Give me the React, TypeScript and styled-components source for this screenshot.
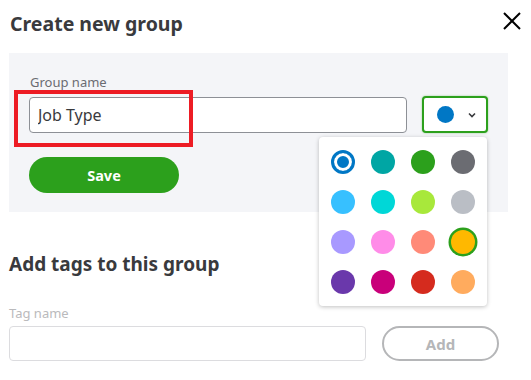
import React from 'react';
import styled, {createGlobalStyle} from "styled-components";

const GlobalStyle = createGlobalStyle`
    body {
        margin: 0;
        background: #ffffff;
        font-family: 'Noto Sans', 'Lato', sans-serif;
        color: #393a3d;
    }
`

const colors = [
    '#0077c5', '#00a6a4', '#2ca01c', '#6b6c72',
    '#37c0ff', '#00d7d7', '#a8e83b', '#babec5',
    '#a899ff', '#ff8ce8', '#ff8a78', '#ffb800',
    '#6a38ab', '#c9007a', '#d52b1e', '#ffab5e',
]

export default function App() {
    return (
        <>
            <GlobalStyle/>
            <Dialog>
                <Header>
                    <Title>Create new group</Title>
                    <CloseButton aria-label="close">
                        <svg width="18" height="18" viewBox="0 0 18 18">
                            <path d="M1 1 L17 17 M17 1 L1 17" stroke="#000" strokeWidth="2" fill="none"/>
                        </svg>
                    </CloseButton>
                </Header>

                <Panel>
                    <Label>Group name</Label>
                    <Row>
                        <NameInput defaultValue="Job Type"/>
                        <PickerWrap>
                            <ColorButton>
                                <Swatch $color="#0077c5" $size={17}/>
                                <svg width="8" height="6" viewBox="0 0 8 6">
                                    <path d="M1 1.5 L4 4.5 L7 1.5" stroke="#393a3d" strokeWidth="1.6" fill="none"/>
                                </svg>
                            </ColorButton>
                            <Popover>
                                {colors.map((c, i) => (
                                    <Dot key={c} $color={c} $state={i === 0 ? 'current' : i === 11 ? 'hover' : 'none'}/>
                                ))}
                            </Popover>
                        </PickerWrap>
                    </Row>
                    <SaveButton>Save</SaveButton>
                    <Highlight/>
                </Panel>

                <SectionTitle>Add tags to this group</SectionTitle>
                <Label $muted>Tag name</Label>
                <TagRow>
                    <TagInput/>
                    <AddButton disabled>Add</AddButton>
                </TagRow>
            </Dialog>
        </>
    );
}

const Dialog = styled.div`
    width: 531px;
    height: 380px;
    overflow: hidden;
    box-sizing: border-box;
    padding: 0 23px 0 9px;
`
const Header = styled.div`
    display: flex;
    justify-content: space-between;
    align-items: flex-start;
    height: 53px;
    padding-top: 11px;
    padding-left: 1px;
    margin-right: -12px;
    box-sizing: border-box;
`
const Title = styled.h1`
    margin: 0;
    font-size: 19.5px;
    line-height: 26px;
    font-weight: 700;
    color: #393a3d;
`
const CloseButton = styled.button`
    border: 0;
    background: none;
    padding: 0;
    margin-top: 1px;
    margin-right: -1px;
    display: flex;
`
const Panel = styled.section`
    position: relative;
    height: 159px;
    box-sizing: border-box;
    background: #f4f5f8;
    padding: 20px 20px 0 20px;
`
const Label = styled.div<{ $muted?: boolean }>`
    font-size: 13px;
    line-height: 18px;
    padding-left: ${p => p.$muted ? '0' : '1px'};
    color: ${p => p.$muted ? '#bababc' : '#6b6c72'};
    margin-bottom: ${p => p.$muted ? '4px' : '6px'};
`
const Row = styled.div`
    display: flex;
    align-items: flex-start;
    gap: 15px;
`
const NameInput = styled.input`
    width: 378px;
    height: 36px;
    box-sizing: border-box;
    border: 1px solid #8d9096;
    border-radius: 4px;
    background: #fff;
    padding: 0 8px;
    font-family: inherit;
    font-size: 16px;
    color: #393a3d;
    outline: none;
`
const PickerWrap = styled.div`
    position: relative;
`
const ColorButton = styled.button`
    width: 66px;
    height: 37px;
    margin-top: -1px;
    box-sizing: border-box;
    border: 2px solid #2ca01c;
    border-radius: 4px;
    background: #fff;
    display: flex;
    align-items: center;
    justify-content: center;
    gap: 14px;
    padding: 0 0 0 3px;
    box-shadow: 0 0 2px rgba(44, 160, 28, 0.5);
`
const Swatch = styled.span<{ $color: string, $size: number }>`
    width: ${p => p.$size}px;
    height: ${p => p.$size}px;
    border-radius: 50%;
    background: ${p => p.$color};
`
const Popover = styled.div`
    position: absolute;
    top: 40px;
    right: 1px;
    z-index: 2;
    width: 168px;
    box-sizing: border-box;
    display: grid;
    grid-template-columns: repeat(4, 24px);
    gap: 16px;
    padding: 13px 12px 12px;
    background: #fff;
    border-radius: 4px;
    box-shadow: 0 1px 4px rgba(0, 0, 0, 0.25);
`
const Dot = styled.span<{ $color: string, $state: 'current' | 'hover' | 'none' }>`
    width: 24px;
    height: 24px;
    box-sizing: border-box;
    border-radius: 50%;
    background: ${p => p.$state === 'current' ? '#fff' : p.$color};
    ${p => p.$state === 'current' && `
        border: 3px solid ${p.$color};
        box-shadow: inset 0 0 0 3px #fff, inset 0 0 0 9px ${p.$color};
    `}
    ${p => p.$state === 'hover' && `
        box-shadow: 0 0 0 2.5px #2ca01c;
    `}
`
const SaveButton = styled.button`
    margin-top: 24px;
    width: 150px;
    height: 36px;
    border: 0;
    border-radius: 18px;
    background: #2ca01c;
    color: #fff;
    font-family: inherit;
    font-size: 14.5px;
    font-weight: 700;
`
const Highlight = styled.div`
    position: absolute;
    left: 5px;
    top: 37px;
    width: 179px;
    height: 57px;
    box-sizing: border-box;
    border: 4px solid #ed1c24;
    pointer-events: none;
`
const SectionTitle = styled.h2`
    margin: 39px 0 27px;
    font-size: 19px;
    line-height: 26px;
    font-weight: 700;
    color: #393a3d;
`
const TagRow = styled.div`
    display: flex;
    gap: 16px;
`
const TagInput = styled.input`
    width: 357px;
    height: 35px;
    box-sizing: border-box;
    border: 1px solid #dcdcdf;
    border-radius: 4px;
    outline: none;
`
const AddButton = styled.button`
    width: 117px;
    height: 35px;
    box-sizing: border-box;
    border: 2px solid #b5b6b8;
    border-radius: 18px;
    background: #fff;
    color: #b5b6b8;
    font-family: inherit;
    font-size: 15px;
    font-weight: 700;
`
